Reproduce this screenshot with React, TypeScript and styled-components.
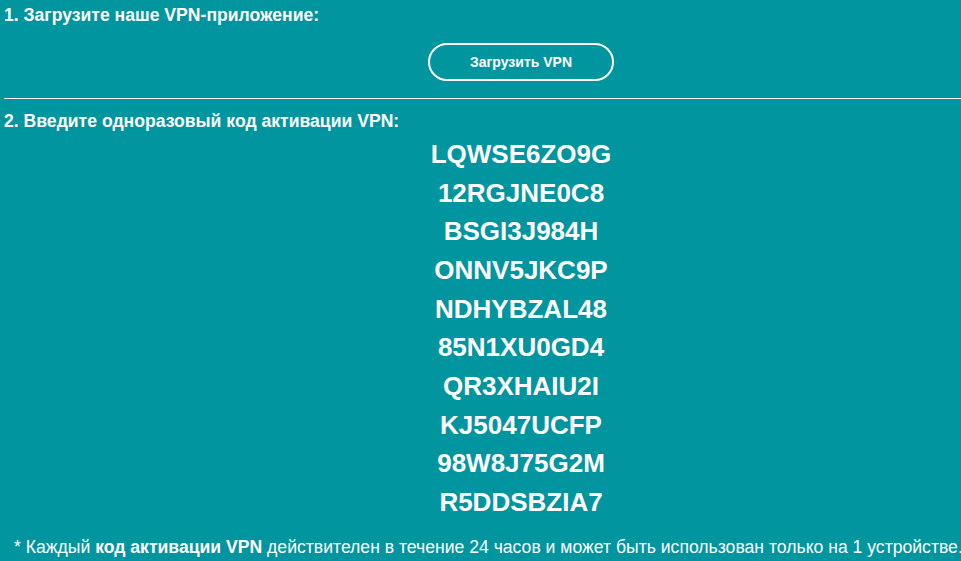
import React from 'react';
import styled, { createGlobalStyle } from 'styled-components';

const codes = [
  'LQWSE6ZO9G',
  '12RGJNE0C8',
  'BSGI3J984H',
  'ONNV5JKC9P',
  'NDHYBZAL48',
  '85N1XU0GD4',
  'QR3XHAIU2I',
  'KJ5047UCFP',
  '98W8J75G2M',
  'R5DDSBZIA7',
];

const App: React.FC = () => {
  return (
    <>
      <GlobalStyle />
      <Page>
        <StepTitle>1. Загрузите наше VPN-приложение:</StepTitle>
        <ButtonRow>
          <DownloadButton type="button">Загрузить VPN</DownloadButton>
        </ButtonRow>
        <Divider />
        <StepTitle $tight>2. Введите одноразовый код активации VPN:</StepTitle>
        <CodeList>
          {codes.map((code) => (
            <Code key={code}>{code}</Code>
          ))}
        </CodeList>
        <Footnote>
          * Каждый <strong>код активации VPN</strong> действителен в течение 24
          часов и может быть использован только на 1 устройстве.
        </Footnote>
      </Page>
    </>
  );
};

const GlobalStyle = createGlobalStyle`
  html,
  body {
    margin: 0;
    padding: 0;
    background: #00959f;
    overflow: hidden;
  }

  body {
    font-family: 'Liberation Sans', Arial, sans-serif;
    color: #ffffff;
  }
`;

const Page = styled.div`
  box-sizing: border-box;
  display: flex;
  flex-direction: column;
  margin-left: 4px;
  padding-top: 5px;
  width: 1034px;
`;

interface StepTitleProps {
  $tight?: boolean;
}

const StepTitle = styled.h2<StepTitleProps>`
  font-size: 17.6px;
  font-weight: 700;
  line-height: 20px;
  margin: ${(props) => (props.$tight ? '11.5px 0 4.5px' : '0')};
`;

const ButtonRow = styled.div`
  display: flex;
  justify-content: center;
  padding: 18px 0 17px;
`;

const DownloadButton = styled.button`
  background: transparent;
  border: 2px solid #ffffff;
  border-radius: 19px;
  box-sizing: border-box;
  color: #ffffff;
  cursor: pointer;
  font-family: 'Liberation Sans', Arial, sans-serif;
  font-size: 14px;
  font-weight: 700;
  height: 38px;
  padding: 0;
  width: 186px;
`;

const Divider = styled.hr`
  border: 0;
  border-top: 1px solid #ffffff;
  margin: 0;
`;

const CodeList = styled.div`
  display: flex;
  flex-direction: column;
  align-items: center;
`;

const Code = styled.div`
  font-size: 26px;
  font-weight: 700;
  line-height: 38.67px;
`;

const Footnote = styled.p`
  font-size: 17.6px;
  line-height: 20px;
  margin: 15.3px 0 0;
  padding-left: 10px;
  white-space: nowrap;
`;

export default App;
